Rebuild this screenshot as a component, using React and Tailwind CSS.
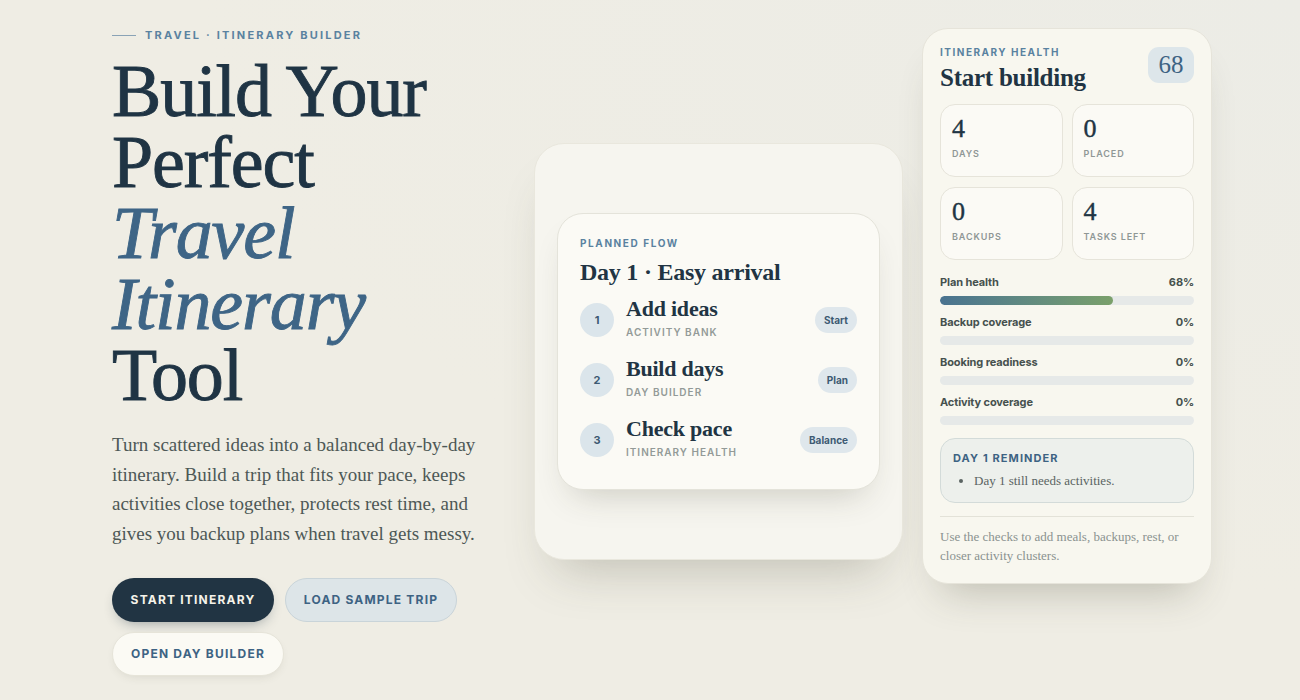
import React from 'react';

const serif = { fontFamily: '"Liberation Serif", "DejaVu Serif", serif' };
const sans = { fontFamily: 'Inter, "Liberation Sans", sans-serif' };

const steps = [
    { n: 1, title: 'Add ideas', sub: 'Activity bank', tag: 'Start' },
    { n: 2, title: 'Build days', sub: 'Day builder', tag: 'Plan' },
    { n: 3, title: 'Check pace', sub: 'Itinerary health', tag: 'Balance' },
];

const stats = [
    { value: '4', label: 'Days' },
    { value: '0', label: 'Placed' },
    { value: '0', label: 'Backups' },
    { value: '4', label: 'Tasks left' },
];

const meters = [
    { label: 'Plan health', pct: 68 },
    { label: 'Backup coverage', pct: 0 },
    { label: 'Booking readiness', pct: 0 },
    { label: 'Activity coverage', pct: 0 },
];

const Hero = () => (
    <div className="w-[380px] shrink-0 pt-[27px]">
        <div className="flex items-center gap-[9px]">
            <span className="block w-6 h-px bg-[#8aa3b6]" />
            <span style={sans} className="text-[11px] leading-4 font-bold tracking-[0.2em] uppercase text-[#5a82a0]">
                Travel · Itinerary Builder
            </span>
        </div>
        <h1 style={serif} className="mt-[13px] text-[74px] leading-[71px] tracking-[-0.015em] text-[#1f3444] [-webkit-text-stroke:0.9px_#1f3444]">
            Build Your
            <br />
            Perfect
            <br />
            <em className="text-[#3e6586] [-webkit-text-stroke:0.9px_#3e6586]">Travel</em>
            <br />
            <em className="text-[#3e6586] [-webkit-text-stroke:0.9px_#3e6586]">Itinerary</em>
            <br />
            Tool
        </h1>
        <p style={serif} className="mt-[19px] text-[19px] leading-[29.5px] text-[#4d5856] whitespace-nowrap">
            Turn scattered ideas into a balanced day-by-day
            <br />
            itinerary. Build a trip that fits your pace, keeps
            <br />
            activities close together, protects rest time, and
            <br />
            gives you backup plans when travel gets messy.
        </p>
        <div style={sans} className="mt-[30px] flex flex-wrap gap-x-[11px] gap-y-[10px] text-[12px] font-bold">
            <button className="h-11 w-[162px] rounded-full bg-[#213443] text-[#f5f3ea] uppercase tracking-[0.1em] shadow-[0_6px_14px_-6px_rgba(20,40,55,0.45)]">
                Start itinerary
            </button>
            <button className="h-11 w-[172px] rounded-full bg-[#dde5e8] border border-[#c9d4d9] text-[#3d6383] uppercase tracking-[0.1em]">
                Load sample trip
            </button>
            <button className="h-11 w-[172px] rounded-full bg-[#fbfaf4] border border-[#e6e4d9] text-[#3d6383] uppercase tracking-[0.1em] shadow-[0_4px_12px_-6px_rgba(60,60,40,0.2)]">
                Open day builder
            </button>
        </div>
    </div>
);

const FlowCard = () => (
    <div className="ml-[42px] mt-[143px] w-[369px] h-[417px] shrink-0 rounded-[30px] bg-[#f6f5ef] border border-[#e9e7dd] shadow-[0_30px_50px_-22px_rgba(70,70,50,0.28)] flex items-center justify-center">
        <div className="w-[323px] rounded-[26px] bg-[#fbfaf5] border border-[#e4e3da] shadow-[0_18px_34px_-16px_rgba(60,60,40,0.25)] pl-[22px] pr-[22px] pt-[22px] pb-[30px]">
            <div style={sans} className="text-[10px] leading-[14px] font-bold tracking-[0.16em] uppercase text-[#5a82a0]">
                Planned flow
            </div>
            <div style={serif} className="mt-2 text-[24px] leading-[28px] font-semibold tracking-[-0.01em] text-[#213443]">
                Day 1 · Easy arrival
            </div>
            <div className="mt-[11px] flex flex-col gap-[18px]">
                {steps.map(s => (
                    <div key={s.n} className="flex items-center">
                        <div style={sans} className="w-[34px] h-[34px] mt-1 shrink-0 rounded-full bg-[#dbe5eb] flex items-center justify-center text-[11px] font-bold text-[#3d5a73]">
                            {s.n}
                        </div>
                        <div className="ml-3 flex-1">
                            <div style={serif} className="text-[22px] leading-6 font-bold tracking-[-0.01em] text-[#213443]">
                                {s.title}
                            </div>
                            <div style={sans} className="mt-1 text-[10px] leading-[14px] font-semibold tracking-[0.1em] uppercase text-[#939a98]">
                                {s.sub}
                            </div>
                        </div>
                        <span style={sans} className="mt-1 h-[26px] px-[9px] rounded-full bg-[#dfe7ec] flex items-center text-[10px] font-bold text-[#3d5a73]">
                            {s.tag}
                        </span>
                    </div>
                ))}
            </div>
        </div>
    </div>
);

const HealthPanel = () => (
    <div className="ml-[19px] mt-[28px] w-[290px] shrink-0 self-start rounded-[26px] bg-[#f8f7ef] border border-[#e6e4da] shadow-[0_26px_40px_-20px_rgba(70,70,50,0.3)] px-[17px] pt-[16px] pb-[18px]">
        <div className="flex items-start justify-between">
            <div>
                <div style={sans} className="text-[10px] leading-[14px] font-bold tracking-[0.15em] uppercase text-[#5a82a0]">
                    Itinerary health
                </div>
                <div style={serif} className="mt-[5px] text-[25px] leading-[28px] font-semibold tracking-[-0.01em] text-[#213443]">
                    Start building
                </div>
            </div>
            <div style={serif} className="mt-[2px] w-[46px] h-[36px] rounded-[11px] bg-[#dde6ea] flex items-center justify-center text-[25px] text-[#3d6383]">
                68
            </div>
        </div>

        <div className="mt-3 grid grid-cols-2 gap-x-[9px] gap-y-[10px]">
            {stats.map(s => (
                <div key={s.label} className="h-[73px] rounded-[15px] border border-[#e6e4da] bg-[#fbfaf5] px-[11px] pt-[10px]">
                    <div style={serif} className="text-[26px] leading-[28px] text-[#213443] [-webkit-text-stroke:0.4px_#213443]">{s.value}</div>
                    <div style={sans} className="mt-[5px] text-[9px] leading-3 font-semibold tracking-[0.1em] uppercase text-[#8f9795]">
                        {s.label}
                    </div>
                </div>
            ))}
        </div>

        <div className="mt-[14px] flex flex-col gap-[9px]">
            {meters.map(m => (
                <div key={m.label}>
                    <div style={sans} className="flex justify-between text-[11px] leading-4 font-bold tracking-[-0.01em] text-[#46514e]">
                        <span>{m.label}</span>
                        <span>{m.pct}%</span>
                    </div>
                    <div className="mt-[6px] h-[9px] rounded-full bg-[#e6e9e8] overflow-hidden">
                        <div
                            className="h-full rounded-full bg-gradient-to-r from-[#4a7390] to-[#7aa06a]"
                            style={{ width: `${m.pct}%` }}
                        />
                    </div>
                </div>
            ))}
        </div>

        <div className="mt-[13px] rounded-[15px] border border-[#d3dbd9] bg-[#edf0ec] px-3 pt-[12px] pb-[12px]">
            <div style={sans} className="text-[11px] leading-[14px] font-bold tracking-[0.1em] uppercase text-[#3d6383]">
                Day 1 reminder
            </div>
            <ul style={serif} className="mt-[7px] pl-[21px] list-disc text-[13px] leading-[18px] text-[#5a6462] marker:text-[#5a6462]">
                <li>Day 1 still needs activities.</li>
            </ul>
        </div>

        <div className="mt-[13px] h-px bg-[#e3e2d8]" />
        <p style={serif} className="mt-[10px] text-[13px] leading-[19px] text-[#8a9290]">
            Use the checks to add meals, backups, rest, or closer activity clusters.
        </p>
    </div>
);

export default function App() {
    return (
        <div className="h-[700px] w-full overflow-hidden bg-[#efede4] bg-[radial-gradient(ellipse_at_top_right,#ecece6_0%,#efede4_60%)]">
            <div className="flex items-start pl-[112px]">
                <Hero />
                <FlowCard />
                <HealthPanel />
            </div>
        </div>
    );
}
